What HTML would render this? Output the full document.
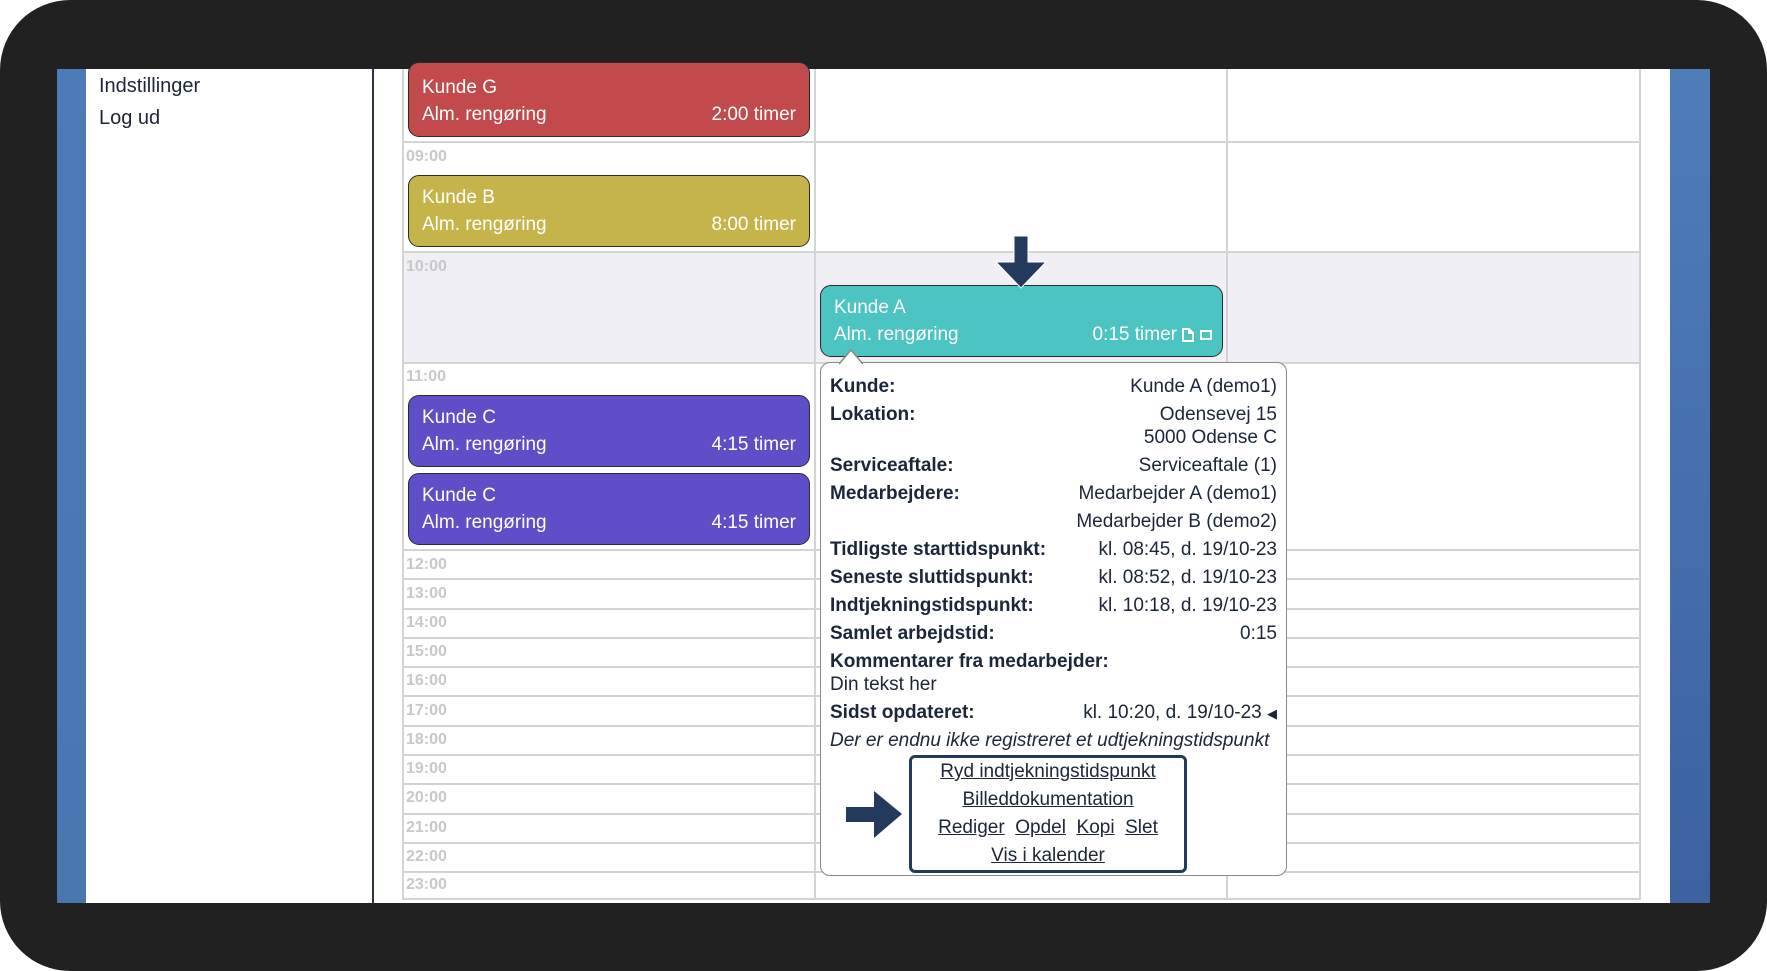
<!DOCTYPE html>
<html><head><meta charset="utf-8"><style>
*{margin:0;padding:0;box-sizing:border-box}
body{width:1767px;height:971px;background:#fff;position:relative;overflow:hidden;font-family:"Liberation Sans",Arial,sans-serif;color:#1b2638}
.abs{position:absolute}
.frame{position:absolute;left:0;top:0;width:1767px;height:971px;border-radius:70px;background:#222122}
.screen{position:absolute;left:57px;top:69px;width:1653px;height:834px;background:#fff;overflow:hidden}
.hl{position:absolute;left:402px;width:1238px;height:2px;background:#d4d4d4}
.vl{position:absolute;width:2px;background:#d4d4d4}
.hr{position:absolute;left:406px;font-size:16px;font-weight:bold;color:#c8c8c8}
.ev{position:absolute;border:1.5px solid #2b2b2b;border-radius:11px;color:#fff;font-size:19px;padding:0 13px}
.ev .t{position:absolute;left:13px;top:11px}
.ev .s{position:absolute;left:13px;top:38px}
.ev .d{position:absolute;right:13px;top:38px}
.pop{position:absolute;left:820px;top:362px;width:467px;height:514px;border:1.5px solid #888;border-radius:10px;background:#fff;font-size:19px}
.row{position:absolute;left:9px;right:9px;height:24px;white-space:nowrap}
.row b{position:absolute;left:0}
.row span{position:absolute;right:0}
.lk{position:absolute;left:0;width:100%;text-align:center;font-size:19px;text-decoration:underline}
</style></head><body>
<div class="frame"></div>
<div class="screen">
 <div class="abs" style="left:0;top:0;width:29px;height:834px;background:linear-gradient(#4d7bb7,#4a76b0)"></div>
 <div class="abs" style="left:1613px;top:0;width:40px;height:834px;background:linear-gradient(#4f7dba,#3c62a0)"></div>
 <div class="abs" style="left:315px;top:0;width:2px;height:834px;background:#2a3446"></div>
 <div class="abs" style="left:42px;top:6px;font-size:20px">Indstillinger</div>
 <div class="abs" style="left:42px;top:38px;font-size:20px">Log ud</div>
</div>
<div class="abs" style="left:402px;top:252px;width:1238px;height:111px;background:#f0eff5"></div>
<div class="vl" style="left:402px;top:69px;height:831px"></div>
<div class="vl" style="left:814px;top:69px;height:831px"></div>
<div class="vl" style="left:1226px;top:69px;height:831px"></div>
<div class="vl" style="left:1639px;top:69px;height:831px"></div>
<div class="hl" style="top:141px"></div><div class="hl" style="top:251px"></div><div class="hl" style="top:362px"></div>
<div class="hl" style="top:549px"></div><div class="hl" style="top:578px"></div><div class="hl" style="top:608px"></div>
<div class="hl" style="top:637px"></div><div class="hl" style="top:666px"></div><div class="hl" style="top:695px"></div>
<div class="hl" style="top:725px"></div><div class="hl" style="top:754px"></div><div class="hl" style="top:783px"></div>
<div class="hl" style="top:813px"></div><div class="hl" style="top:842px"></div><div class="hl" style="top:871px"></div>
<div class="hl" style="top:898px"></div>
<div class="hr" style="top:148px">09:00</div><div class="hr" style="top:258px">10:00</div><div class="hr" style="top:368px">11:00</div>
<div class="hr" style="top:556px">12:00</div><div class="hr" style="top:585px">13:00</div><div class="hr" style="top:614px">14:00</div>
<div class="hr" style="top:643px">15:00</div><div class="hr" style="top:672px">16:00</div><div class="hr" style="top:702px">17:00</div>
<div class="hr" style="top:731px">18:00</div><div class="hr" style="top:760px">19:00</div><div class="hr" style="top:789px">20:00</div>
<div class="hr" style="top:819px">21:00</div><div class="hr" style="top:848px">22:00</div><div class="hr" style="top:876px">23:00</div>

<div class="ev" style="left:408px;top:62px;width:402px;height:75px;background:#c24a4c"><div class="t" style="top:14px">Kunde G</div><div class="s" style="top:41px">Alm. rengøring</div><div class="d" style="top:41px">2:00 timer</div></div>
<div class="ev" style="left:408px;top:175px;width:402px;height:72px;background:#c4b44a"><div class="t">Kunde B</div><div class="s">Alm. rengøring</div><div class="d">8:00 timer</div></div>
<div class="ev" style="left:408px;top:395px;width:402px;height:72px;background:#5e4ec8"><div class="t">Kunde C</div><div class="s">Alm. rengøring</div><div class="d">4:15 timer</div></div>
<div class="ev" style="left:408px;top:473px;width:402px;height:72px;background:#5e4ec8"><div class="t">Kunde C</div><div class="s">Alm. rengøring</div><div class="d">4:15 timer</div></div>
<div class="ev" style="left:820px;top:285px;width:403px;height:72px;background:#4cc4c2"><div class="t">Kunde A</div><div class="s">Alm. rengøring</div><div class="d" style="right:45px">0:15 timer</div>
 <svg class="abs" style="right:9px;top:42px" width="32" height="14"><path d="M2 1h6l4 4v8H2z M8 1v4h4" fill="none" stroke="#fff" stroke-width="2"/><rect x="20" y="3" width="10" height="8" fill="none" stroke="#fff" stroke-width="2"/></svg></div>
<svg class="abs" style="left:994px;top:234px" width="54" height="58"><path d="M20 2h14v26h18L27 54 2 28h18z" fill="#233a5c" stroke="#fff" stroke-width="1"/></svg>

<div class="pop">
 <svg class="abs" style="left:18px;top:-14px" width="24" height="16"><path d="M0 15L12 1 24 15" fill="#fff" stroke="#888" stroke-width="1.5"/></svg>
 <div class="row" style="top:13px"><b>Kunde:</b><span>Kunde A (demo1)</span></div>
 <div class="row" style="top:41px"><b>Lokation:</b><span>Odensevej 15</span></div>
 <div class="row" style="top:64px"><span>5000 Odense C</span></div>
 <div class="row" style="top:92px"><b>Serviceaftale:</b><span>Serviceaftale (1)</span></div>
 <div class="row" style="top:120px"><b>Medarbejdere:</b><span>Medarbejder A (demo1)</span></div>
 <div class="row" style="top:148px"><span>Medarbejder B (demo2)</span></div>
 <div class="row" style="top:176px"><b>Tidligste starttidspunkt:</b><span>kl. 08:45, d. 19/10-23</span></div>
 <div class="row" style="top:204px"><b>Seneste sluttidspunkt:</b><span>kl. 08:52, d. 19/10-23</span></div>
 <div class="row" style="top:232px"><b>Indtjekningstidspunkt:</b><span>kl. 10:18, d. 19/10-23</span></div>
 <div class="row" style="top:260px"><b>Samlet arbejdstid:</b><span>0:15</span></div>
 <div class="row" style="top:288px"><b>Kommentarer fra medarbejder:</b></div>
 <div class="row" style="top:311px">Din tekst her</div>
 <div class="row" style="top:339px"><b>Sidst opdateret:</b><span>kl. 10:20, d. 19/10-23 <span style="position:static;font-size:13px">&#9664;</span></span></div>
 <div class="row" style="top:367px;font-style:italic">Der er endnu ikke registreret et udtjekningstidspunkt</div>
</div>
<svg class="abs" style="left:846px;top:791px" width="56" height="47"><path d="M0 16h28V0l28 23-28 24V31H0z" fill="#233a5c"/></svg>
<div class="abs" style="left:909px;top:755px;width:278px;height:118px;border:3px solid #23395b;border-radius:6px;background:#fff">
 <div class="lk" style="top:3px">Ryd indtjekningstidspunkt</div>
 <div class="lk" style="top:31px">Billeddokumentation</div>
 <div class="lk" style="top:59px;text-decoration:none"><u>Rediger</u>&nbsp; <u>Opdel</u>&nbsp; <u>Kopi</u>&nbsp; <u>Slet</u></div>
 <div class="lk" style="top:87px">Vis i kalender</div>
</div>
</body></html>
